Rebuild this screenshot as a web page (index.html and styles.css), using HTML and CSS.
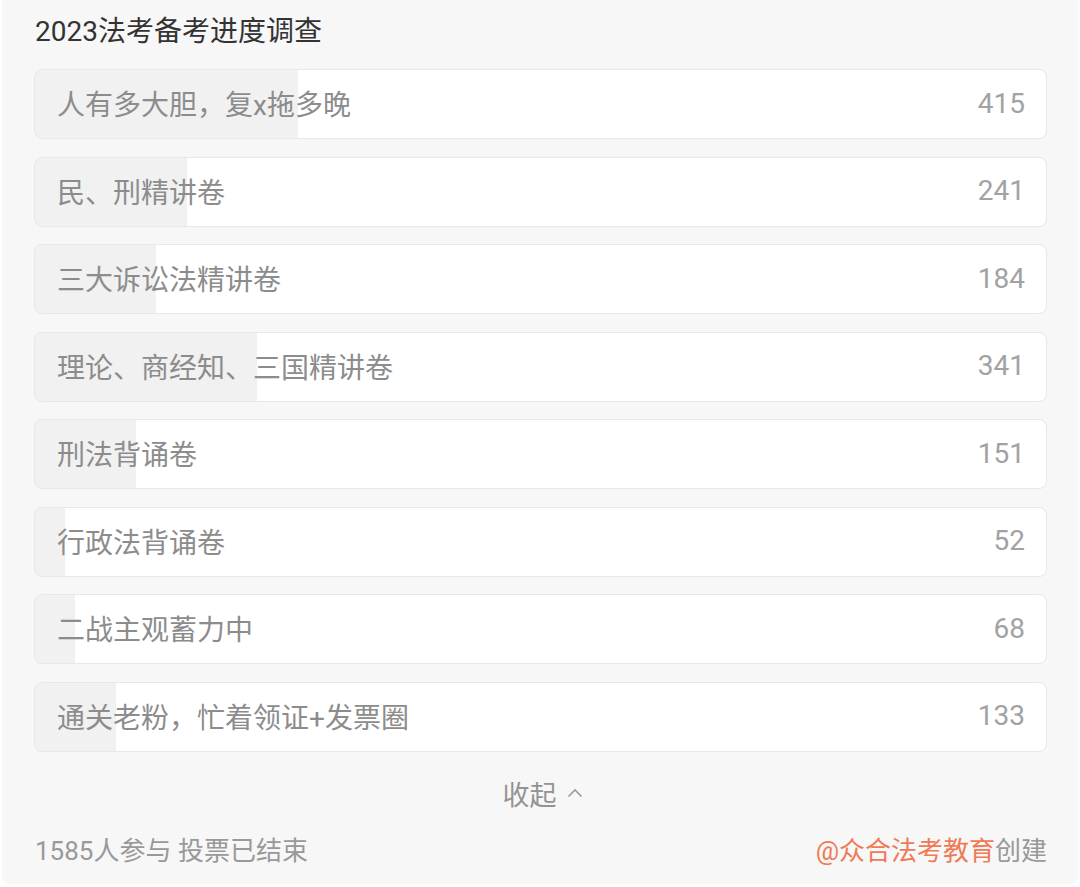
FILE: index.html
```html
<!DOCTYPE html>
<html lang="zh-CN">
<head>
<meta charset="utf-8">
<title>2023法考备考进度调查</title>
<link rel="stylesheet" href="styles.css">
</head>
<body>
<div class="card">
  <div class="title">2023法考备考进度调查</div>
  <div class="options">
    <div class="option" style="--p:26%"><span class="label">人有多大胆，复x拖多晚</span><span class="count">415</span></div>
    <div class="option" style="--p:15%"><span class="label">民、刑精讲卷</span><span class="count">241</span></div>
    <div class="option" style="--p:12%"><span class="label">三大诉讼法精讲卷</span><span class="count">184</span></div>
    <div class="option" style="--p:22%"><span class="label">理论、商经知、三国精讲卷</span><span class="count">341</span></div>
    <div class="option" style="--p:10%"><span class="label">刑法背诵卷</span><span class="count">151</span></div>
    <div class="option" style="--p:3%"><span class="label">行政法背诵卷</span><span class="count">52</span></div>
    <div class="option" style="--p:4%"><span class="label">二战主观蓄力中</span><span class="count">68</span></div>
    <div class="option" style="--p:8%"><span class="label">通关老粉，忙着领证+发票圈</span><span class="count">133</span></div>
  </div>
  <div class="collapse">收起<svg class="chev" width="16" height="10" viewBox="0 0 16 10"><polyline points="1.5,8.5 8,2 14.5,8.5" fill="none" stroke="#9a9a9a" stroke-width="1.6"/></svg></div>
  <div class="footer">
    <span class="meta">1585人参与 投票已结束</span>
    <span class="creator"><span class="author">@众合法考教育</span>创建</span>
  </div>
</div>
</body>
</html>
```

FILE: styles.css
```css
html, body {
  margin: 0;
  padding: 0;
  background: #ffffff;
}
body {
  font-family: Roboto, "Noto Sans CJK SC", sans-serif;
}
.card {
  margin: 0 2px;
  background: #f7f7f7;
  border-radius: 0 0 8px 8px;
  padding: 12px 31px 13px 32px;
}
.title {
  font-size: 28px;
  line-height: 40px;
  color: #333333;
  padding-left: 1px;
}
.options {
  margin-top: 17px;
  display: flex;
  flex-direction: column;
  gap: 17.5px;
}
.option {
  height: 70px;
  box-sizing: border-box;
  border: 1px solid #e8e8e8;
  border-radius: 8px;
  background: linear-gradient(to right, #f1f1f1 var(--p), #ffffff var(--p));
  display: flex;
  align-items: center;
  justify-content: space-between;
  padding: 0 21px 0 22px;
  font-size: 28px;
}
.label {
  color: #8c8c8c;
  margin-top: -2px;
}
.count {
  color: #a2a2a2;
  margin-top: -2px;
}
.collapse {
  margin-top: 24.5px;
  height: 40px;
  line-height: 40px;
  font-size: 27px;
  color: #939393;
  display: flex;
  justify-content: center;
  align-items: center;
  gap: 10px;
  padding-left: 4px;
}
.chev {
  margin-top: -6px;
}
.footer {
  margin-top: 15px;
  height: 40px;
  line-height: 40px;
  display: flex;
  justify-content: space-between;
  font-size: 26px;
  color: #999999;
  padding-left: 1px;
}
.author {
  color: #f07a55;
}
```
